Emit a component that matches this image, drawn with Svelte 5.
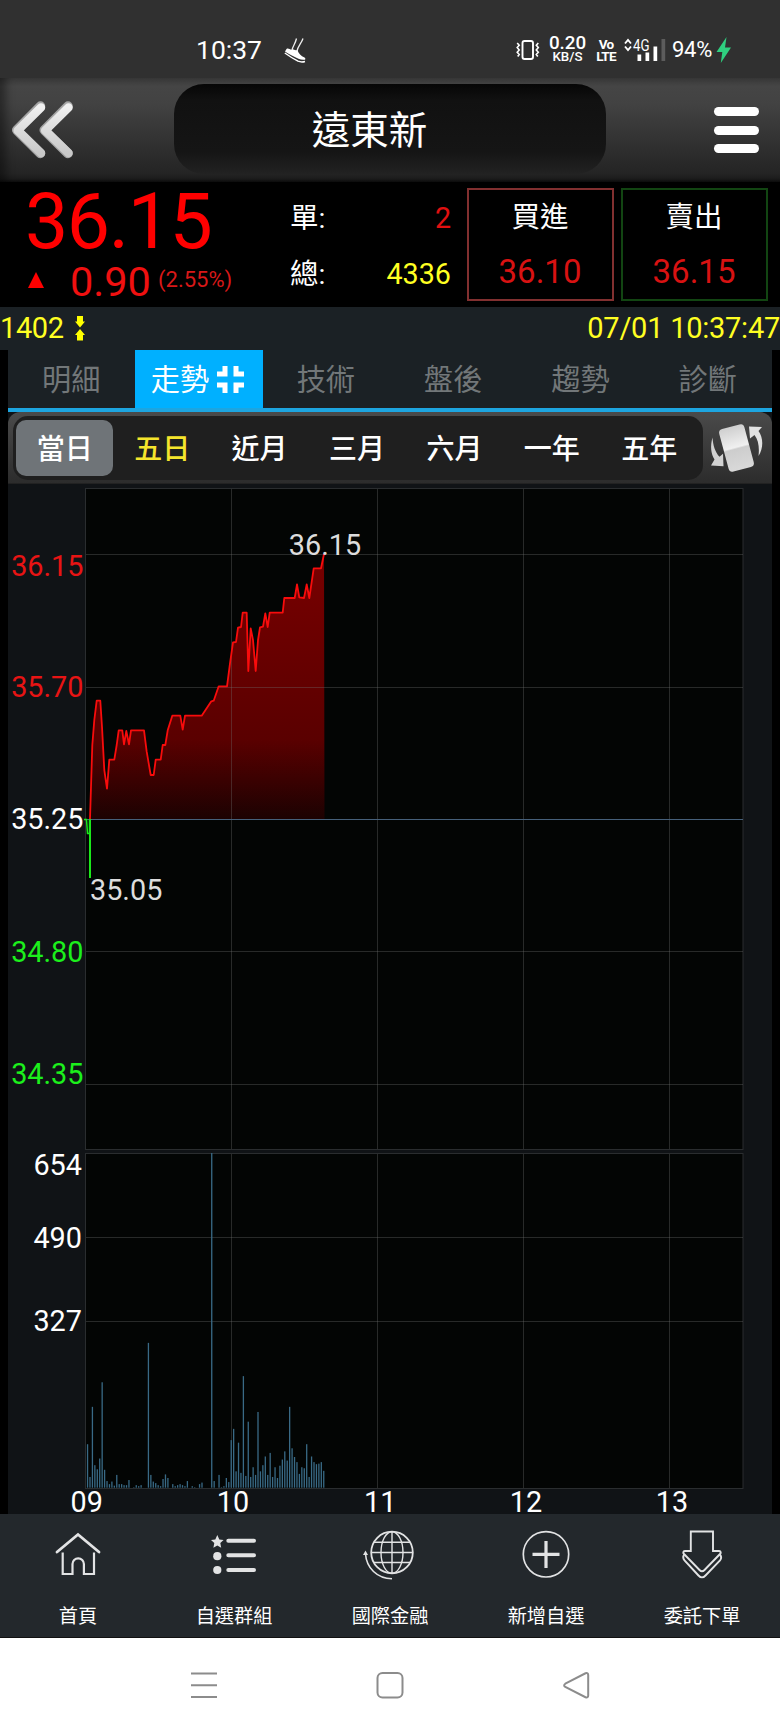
<script lang="ts">
  const tabs = ['明細', '走勢', '技術', '盤後', '趨勢', '診斷'];
  const ranges = ['當日', '五日', '近月', '三月', '六月', '一年', '五年'];
  const navItems = [
    { id: 'home', label: '首頁' },
    { id: 'list', label: '自選群組' },
    { id: 'globe', label: '國際金融' },
    { id: 'add', label: '新增自選' },
    { id: 'order', label: '委託下單' },
  ];

  let activeTab = $state(1);
  let activeRange = $state(0);

  const hours = [
    { label: '09', x: 86.7 },
    { label: '10', x: 233 },
    { label: '11', x: 380.2 },
    { label: '12', x: 526 },
    { label: '13', x: 672 },
  ];
  const gridX = [231.5, 377.5, 523.5, 669.5];
  const priceGridY = [554.5, 687.5, 951.5, 1084.5];
  const volumeGridY = [1237.5, 1321.5];

  const priceLabels = [
    { text: '36.15', y: 575.5, cls: 'up' },
    { text: '35.70', y: 696.7, cls: 'up' },
    { text: '35.25', y: 829, cls: 'flat' },
    { text: '34.80', y: 961.7, cls: 'down' },
    { text: '34.35', y: 1083.5, cls: 'down' },
  ];
  const volumeLabels = [
    { text: '654', y: 1174.5 },
    { text: '490', y: 1247.5 },
    { text: '327', y: 1330.5 },
  ];

  const pricePoints =
    '90,819 92.3,745 94.3,720 96.7,700.7 100.3,700.7 102,726.7 104.3,770 107,788.7 109.3,759.7 ' +
    '114.3,759.7 116.7,745 118.7,730.3 122.3,730.3 124,744.3 126.3,731 129,744.3 131,730.3 144,730.3 ' +
    '146.7,751.7 150.7,775 153.7,775 155.7,759.7 160.7,759.7 162.7,745 165.3,745 167.7,730.3 ' +
    '172.3,715.7 180.3,715.7 182.7,729.7 185,715.7 201.7,715.7 211.3,701.3 213.7,700.7 218.7,686.3 ' +
    '227,686.3 230,663.3 233,642.3 236,642 238,627.7 241,627 242.7,612.7 246.7,612.7 248.3,671 ' +
    '250.7,628.3 253,640 255.7,671 258,640 260,627.3 263,626.7 265.3,613.3 267.7,627 269.7,612.7 ' +
    '282.7,612.7 284.3,598 294.7,598 297,584.3 299.3,597.3 304,598 306.7,584.3 309.3,598 313.7,568.3 ' +
    '321,568.3 324,554';

  // one entry per minute from 09:00
  const volumes = [
    85, 21, 158, 44, 36, 57, 206, 35, 13, 7, 12, 4, 25, 7, 7, 5, 5, 15, 0, 1,
    5, 3, 5, 0, 0, 283, 25, 12, 9, 5, 3, 17, 26, 19, 0, 7, 3, 5, 7, 5,
    3, 13, 0, 3, 1, 0, 7, 10, 0, 0, 0, 654, 13, 0, 25, 1, 3, 19, 11, 93,
    115, 32, 88, 29, 218, 23, 129, 21, 40, 25, 148, 32, 44, 61, 25, 68, 21, 40, 19, 43,
    55, 71, 53, 158, 77, 60, 50, 27, 40, 38, 85, 21, 61, 50, 46, 47, 50, 33,
  ];
  const volumeBase = 1487.7;
  const volumeHeight = 334.7;
  const bars = $derived(
    volumes.map((v, i) => {
      const h = (v / 654) * volumeHeight;
      return { x: 86.9 + i * 2.435, y: volumeBase - h, h };
    })
  );
</script>

<div class="screen">
  <!-- System status bar -->
  <div class="status">
    <span class="clock">10:37</span>
    <svg class="shoe" width="24" height="26" viewBox="0 0 24 26">
      <path d="M12.500 1.500C11.500 6 9 9 8 13M19 1.500C17.500 6 14 9 13 14" stroke="#eee" stroke-width="1.300" fill="none" />
      <path d="M2.500 12c2-1.500 3.500 1.300 6 .5 1.500 0 3 .8 5 .8 1 3.200 3.500 5.700 7 7.200 1 .5 1 1.500.500 2.200-2 .3-4.500.1-6.500-.9C9.500 19.600 5 17 1 14.500z" fill="#fff" />
      <path d="M.8 16C5 19 10 22 14 24.200c2.500 1 5 .9 7 .3" stroke="#fff" stroke-width="1.400" fill="none" />
    </svg>
    <div class="status-right">
      <svg class="vibrate" width="24" height="22" viewBox="0 0 24 22">
        <rect x="6.500" y="2" width="10.500" height="18" rx="2" fill="none" stroke="#fff" stroke-width="1.900" />
        <path d="M1.200 4l2 2.300-2 2.300 2 2.300-2 2.300 2 2.300-1.500 2M22.300 4l-2 2.300 2 2.300-2 2.300 2 2.300-2 2.300 1.500 2" fill="none" stroke="#fff" stroke-width="1.600" />
      </svg>
      <div class="speed"><b>0.20</b><span>KB/S</span></div>
      <div class="volte"><span>Vo</span><span>LTE</span></div>
      <svg class="signal" width="42" height="24" viewBox="0 0 42 24">
        <path d="M1 5.500 4 2l3 3.500M1 8.500 4 12l3-3.500" fill="none" stroke="#fff" stroke-width="1.900" />
        <text x="9" y="12.500" class="net" textLength="16.500" lengthAdjust="spacingAndGlyphs">4G</text>
        <rect x="13.500" y="16.500" width="3.700" height="6.500" fill="#fff" />
        <rect x="21.500" y="14.500" width="3.700" height="8.500" fill="#fff" />
        <rect x="29.500" y="8.500" width="3.700" height="14.500" fill="#fff" />
        <rect x="37.500" y="1" width="3.700" height="22" fill="#5c5c5c" />
      </svg>
      <span class="battery">94%</span>
      <svg width="16" height="26" viewBox="0 0 16 26">
        <path d="M10.500 0 .5 15h5.800L4.800 26 15 10.500H9z" fill="#2fcf7f" />
      </svg>
    </div>
  </div>

  <!-- App header -->
  <header class="header">
    <button class="back" aria-label="返回">
      <svg width="64" height="60" viewBox="0 0 64 60">
        <defs>
          <linearGradient id="chev" x1="0" y1="0" x2="0" y2="1">
            <stop offset="0" stop-color="#f0f0f0" />
            <stop offset="1" stop-color="#c8c8c8" />
          </linearGradient>
        </defs>
        <path d="M29.500 6 5.700 30 29.500 53.500M57 6 33.200 30 57 53.500" class="chev-edge" />
        <path d="M30 7.500 6.700 30.500 30 53M57.500 7.500 34.200 30.500l23.300 22.500" class="chev" />
      </svg>
    </button>
    <h1 class="title">遠東新</h1>
    <button class="menu" aria-label="選單">
      <i></i><i></i><i></i>
    </button>
  </header>

  <!-- Quote summary -->
  <section class="quote">
    <div class="last">
      <div class="last-price">36.15</div>
      <div class="change">
        <svg width="16" height="16" viewBox="0 0 16 16"><path d="M8 0l8 16H0z" fill="#f00" /></svg>
        <span class="diff">0.90</span>
        <span class="pct">(2.55%)</span>
      </div>
    </div>
    <dl class="totals">
      <div><dt>單:</dt><dd class="red">2</dd></div>
      <div><dt>總:</dt><dd class="yellow">4336</dd></div>
    </dl>
    <button class="deal buy"><span>買進</span><b>36.10</b></button>
    <button class="deal sell"><span>賣出</span><b>36.15</b></button>
  </section>

  <div class="info">
    <span class="code">1402</span>
    <svg width="10" height="25" viewBox="0 0 10 25">
      <path d="M2 0h6v5.500h2L5 11.500 0 5.500h2zM5 13l5 6H8v5.500H2V19H0z" fill="#ff0" />
    </svg>
    <span class="time">07/01 10:37:47</span>
  </div>

  <main class="body">
    <nav class="tabs">
      {#each tabs as tab, i}
        <button class="tab" class:active={i === activeTab} onclick={() => (activeTab = i)}>
          <span>{tab}</span>
          {#if i === activeTab}
            <svg width="27" height="27" viewBox="0 0 27 27">
              <path d="M0 8h8V0M19 0v8h8M0 19h8v8M19 27v-8h8" class="shrink" />
            </svg>
          {/if}
        </button>
      {/each}
    </nav>

    <div class="range-bar">
      <div class="ranges">
        {#each ranges as range, i}
          <button
            class="range"
            class:active={i === activeRange}
            class:marked={i === 1}
            onclick={() => (activeRange = i)}
          >
            {range}
          </button>
        {/each}
      </div>
      <button class="rotate" aria-label="旋轉">
        <svg width="54" height="52" viewBox="0 0 54 52">
          <defs>
            <linearGradient id="phone" x1="0" y1="0" x2="0" y2="1">
              <stop offset="0" stop-color="#cfcfcf" />
              <stop offset="0.480" stop-color="#f0f0f0" />
              <stop offset="0.520" stop-color="#cdcdcd" />
              <stop offset="1" stop-color="#d9d9d9" />
            </linearGradient>
          </defs>
          <rect x="14.500" y="4" width="26" height="44" rx="4" fill="url(#phone)" transform="rotate(-15 27.500 26)" />
          <path d="M3.500 15.500C1 24 2 32 5.500 37.500L2 43.500l12.500.800-.500-12.500-3.500 3C6 30 4 23 3.500 15.500z" fill="#d2d2d2" />
          <path d="M40 4.500 53 5l-3.500 4C54.500 16 54.500 26 49.500 34 50.500 26 49.500 18 45.500 13L41 16.500z" fill="#e2e2e2" />
        </svg>
      </button>
    </div>

    <svg class="chart" width="764" height="1030" viewBox="8 484 764 1030">
      <defs>
        <linearGradient id="area" gradientUnits="userSpaceOnUse" x1="0" y1="554" x2="0" y2="819">
          <stop offset="0" stop-color="#780000" />
          <stop offset="0.700" stop-color="#5a0000" />
          <stop offset="1" stop-color="#1c0202" />
        </linearGradient>
      </defs>

      <rect x="85.500" y="488.500" width="657.500" height="661" class="plot" />
      <rect x="85.500" y="1153.500" width="657.500" height="335" class="plot" />

      <polygon points="{pricePoints} 324.5,819 90,819" fill="url(#area)" />

      {#each gridX as x}
        <line x1={x} x2={x} y1="489" y2="1149" class="grid" />
        <line x1={x} x2={x} y1="1154" y2="1488" class="grid" />
      {/each}
      {#each [...priceGridY, ...volumeGridY] as y}
        <line x1="86" x2="743" y1={y} y2={y} class="grid" />
      {/each}
      <line x1="86" x2="743" y1="819.500" y2="819.500" class="ref-line" />

      <polyline points={pricePoints} class="line-up" />
      <path d="M84 819.500h2.500l1 14h2V820" class="line-down" />
      <path d="M90 819v59" class="line-down thick" />

      {#each bars as bar}
        <rect x={bar.x} y={bar.y} width="1.300" height={bar.h} class="bar" />
      {/each}

      {#each priceLabels as label}
        <text x="83.500" y={label.y} class="axis {label.cls}">{label.text}</text>
      {/each}
      {#each volumeLabels as label}
        <text x="82" y={label.y} class="axis flat">{label.text}</text>
      {/each}
      {#each hours as hour}
        <text x={hour.x} y="1511.500" class="hour">{hour.label}</text>
      {/each}
      <text x="325" y="554.500" class="peak" text-anchor="middle">36.15</text>
      <text x="90" y="899.500" class="peak">35.05</text>
    </svg>
  </main>

  <!-- Bottom navigation -->
  <nav class="bottom">
    {#each navItems as item}
      <button class="nav-item">
        <svg width="60" height="60" viewBox="0 0 60 60">
          {#if item.id === 'home'}
            <path d="M9 27 30 9.500 51 27" stroke-width="2.800" stroke-linecap="round" />
            <path d="M14.700 27.500V49H24.500V39a5.700 5.700 0 0 1 11.400 0V49H46V27.500" stroke-width="2.200" />
          {:else if item.id === 'list'}
            <path d="M13.300 10l2 4.400 4.300.500-3.300 3.200.9 4.600-3.900-2.300-3.900 2.300.9-4.600L7 14.900l4.300-.5z" class="solid" />
            <circle cx="13.300" cy="31.200" r="4.100" class="solid" />
            <circle cx="13.300" cy="45" r="4.100" class="solid" />
            <path d="M24.300 15.700H50M24.300 30.300H50M24.300 45H50" stroke-width="4" stroke-linecap="round" />
          {:else if item.id === 'globe'}
            <circle cx="32" cy="27.500" r="20.800" stroke-width="1.800" />
            <ellipse cx="32" cy="27.500" rx="11" ry="20.800" stroke-width="1.400" />
            <path d="M32 7v41M11 27.500h42M14 17.300h36M14 37.500h36" stroke-width="1.400" />
            <path d="M5.500 29C6.500 43 17 53.500 32 53.800" stroke-width="1.600" />
            <path d="M5.500 25.500l2.500 4.500H3z" class="solid" />
          {:else if item.id === 'add'}
            <circle cx="30" cy="29.300" r="22.700" stroke-width="1.700" />
            <path d="M30 16v27M16.500 29.300h27" stroke-width="3.200" />
          {:else}
            <path d="M18.800 6.500H41V26h6c2 .3 2.200 1.700 1 3L32.500 45c-1.700 1.700-3.300 1.700-5 0L12 29c-1.200-1.300-1-2.700 1-3h5.800z" stroke-width="1.900" />
            <path d="M12.500 29c-2 2.800-1.600 4.500 0 6.300L26.500 50.500c2.400 2.500 4.600 2.500 7 0L48 35.300c1.600-1.800 2-3.500-.500-6.300" stroke-width="1.900" />
          {/if}
        </svg>
        <span>{item.label}</span>
      </button>
    {/each}
  </nav>

  <!-- System navigation -->
  <div class="system">
    <svg width="28" height="28" viewBox="0 0 28 28"><path d="M1 2.500h26M1 14.300h26M1 26h26" /></svg>
    <svg width="28" height="28" viewBox="0 0 28 28"><rect x="1.500" y="2" width="25" height="24.500" rx="5" /></svg>
    <svg width="28" height="28" viewBox="0 0 28 28"><path d="M3.300 12.700 23.500 2.300q2.700-.8 2.700 1.700v20.500q0 2.500-2.700 1.700L3.300 16q-2.300-1.600 0-3.300z" /></svg>
  </div>
</div>

<style>
  :global(body) {
    margin: 0;
    background: #000;
  }

  .screen {
    width: 780px;
    height: 1733px;
    display: flex;
    flex-direction: column;
    overflow: hidden;
    background: #000;
    color: #fff;
    font-family: Roboto, 'Noto Sans CJK TC', sans-serif;
  }

  button {
    border: 0;
    padding: 0;
    background: none;
    color: inherit;
    font: inherit;
  }

  svg {
    display: block;
    flex: none;
  }

  /* ── Status bar ───────────────────────────────────────── */
  .status {
    height: 78px;
    flex: none;
    display: flex;
    align-items: center;
    box-sizing: border-box;
    padding: 22px 48px 0 196px;
    background: #303030;
  }

  .clock {
    width: 68px;
    margin-top: -2px;
    font-size: 26.5px;
  }

  .shoe { margin-left: 20px; }

  .status-right {
    margin-left: auto;
    width: 216px;
    display: flex;
    align-items: center;
  }

  .speed {
    width: 37px;
    margin-left: 9px;
    display: flex;
    flex-direction: column;
    align-items: center;
    font-weight: 500;
    line-height: 14px;
    font-size: 13.3px;
  }

  .speed b {
    font-size: 18.8px;
    line-height: 14px;
    font-weight: 500;
  }

  .volte {
    width: 18px;
    margin-left: 11px;
    display: flex;
    flex-direction: column;
    align-items: center;
    font-size: 13.5px;
    font-weight: 700;
    line-height: 12px;
    letter-spacing: -0.8px;
  }

  .signal { margin-left: 9px; }

  .net {
    font-size: 16px;
    fill: #fff;
  }

  .battery {
    width: 41px;
    margin-left: 6px;
    margin-right: 3px;
    font-size: 22px;
    letter-spacing: -0.3px;
    line-height: 24px;
  }

  /* ── Header ───────────────────────────────────────────── */
  .header {
    height: 104px;
    flex: none;
    display: flex;
    align-items: center;
    box-sizing: border-box;
    padding: 0 21px 0 11px;
    background: linear-gradient(#383838, #454545 8%, #424242 25%, #242424 92%, #1c1c1c 97%, #0c0c0c);
    box-shadow: inset 12px 0 8px -6px rgba(0, 0, 0, 0.4);
  }

  .chev,
  .chev-edge {
    fill: none;
    stroke-linecap: round;
    stroke-linejoin: round;
  }

  .chev { stroke: url(#chev); stroke-width: 8.5; }
  .chev-edge { stroke: #a4a4a4; stroke-width: 9.5; }

  .title {
    width: 432px;
    height: 90px;
    margin: -2px 0 0 99px;
    box-sizing: border-box;
    padding-right: 41px;
    border-radius: 30px;
    background: linear-gradient(#060606, #111 18%, #151515 75%, #222);
    text-align: center;
    font-size: 38.5px;
    font-weight: 400;
    line-height: 94px;
  }

  .menu {
    margin-left: auto;
    display: flex;
    flex-direction: column;
    gap: 9.5px;
  }

  .menu i {
    width: 45px;
    height: 9px;
    border-radius: 5px;
    background: #fff;
  }

  /* ── Quote ────────────────────────────────────────────── */
  .quote {
    height: 125px;
    flex: none;
    display: flex;
    box-sizing: border-box;
    padding: 6px 12px 6px 25px;
  }

  .last { width: 265px; }

  .last-price {
    height: 66px;
    line-height: 68px;
    font-size: 77px;
    letter-spacing: -1.4px;
    color: #f00;
  }

  .change {
    display: flex;
    align-items: center;
    height: 46px;
    padding: 3px 0 0 3px;
  }

  .diff {
    width: 84px;
    margin-left: 26px;
    margin-top: 3px;
    font-size: 41.5px;
    line-height: 46px;
    color: #f01010;
  }

  .pct {
    margin-left: 4px;
    margin-top: -2px;
    font-size: 22px;
    color: #d81818;
  }

  .totals {
    width: 161px;
    margin: 0 16px 0 0;
    font-size: 28.7px;
  }

  .totals div {
    display: flex;
    justify-content: space-between;
    height: 56px;
    line-height: 60px;
  }

  dt { font-size: 28.5px; margin-top: 1px; }
  dd { margin: 0; }

  .red { color: #e01010; }
  .yellow { color: #ff2; }

  .deal {
    width: 147px;
    height: 113px;
    box-sizing: border-box;
    display: flex;
    flex-direction: column;
    align-items: center;
    padding: 1px 1px 0 0;
    border: 2px solid #823030;
  }

  .deal.sell {
    margin-left: 7px;
    border-color: #124512;
  }

  .deal span {
    font-size: 28.5px;
    line-height: 54px;
  }

  .deal b {
    font-size: 33px;
    line-height: 54px;
    font-weight: 400;
    color: #d81212;
  }

  .info {
    height: 43px;
    flex: none;
    display: flex;
    box-sizing: border-box;
    padding-top: 9px;
    background: #1b2125;
    color: #ff2;
    font-size: 29px;
    line-height: 24px;
  }

  .code { width: 75px; letter-spacing: -0.4px; }

  .time {
    margin-left: auto;
    letter-spacing: -0.25px;
    white-space: nowrap;
  }

  /* ── Tabs ─────────────────────────────────────────────── */
  .body {
    width: 764px;
    margin: 0 auto;
    background: #101316;
  }

  .tabs {
    display: flex;
    height: 62px;
    box-sizing: border-box;
    border-bottom: 4px solid #1da5e0;
    background: #1b2125;
  }

  .tab {
    flex: 1;
    display: flex;
    align-items: center;
    justify-content: center;
    gap: 8px;
    font-size: 29.2px;
    color: #727779;
  }

  .tab span { margin: -4px 1px 0 0; }

  .tab.active {
    background: #00b0ff;
    color: #fff;
  }

  .tab.active span { margin-right: 0; }
  .tab.active svg { margin-right: 3px; }

  .shrink {
    fill: none;
    stroke: #fff;
    stroke-width: 5;
  }

  /* ── Range selector ───────────────────────────────────── */
  .range-bar {
    display: flex;
    align-items: center;
    height: 72px;
    box-sizing: border-box;
    padding-left: 5px;
    border-bottom: 1px solid #222;
    border-radius: 12px 12px 0 0;
    background: linear-gradient(#4a4a4a, #2c2c2c);
  }

  .ranges {
    width: 690px;
    height: 64px;
    box-sizing: border-box;
    padding: 4px 5px 4px 3px;
    display: flex;
    border-radius: 15px;
    background: #1f1f1f;
  }

  .range {
    flex: 1;
    padding-top: 2px;
    border-radius: 10px;
    font-size: 28px;
    font-weight: 500;
    line-height: 56px;
  }

  .range.marked { color: #f5e52c; }
  .range.active { background: #6f7478; }
  .rotate { margin-left: 6px; }

  /* ── Chart ────────────────────────────────────────────── */
  .plot {
    fill: #030504;
    stroke: #2a2d2f;
    stroke-width: 1;
  }

  .grid {
    stroke: #707070;
    stroke-opacity: 0.35;
  }

  .ref-line { stroke: #46607a; }

  .line-up {
    fill: none;
    stroke: #f80c0c;
    stroke-width: 1.8;
    stroke-linejoin: round;
  }

  .line-down {
    fill: none;
    stroke: #1be81b;
    stroke-width: 1.5;
  }

  .line-down.thick { stroke-width: 2; }
  .bar { fill: #396a86; }

  .axis {
    font-size: 28.8px;
    text-anchor: end;
  }

  .up { fill: #e81414; }
  .flat { fill: #fff; }
  .down { fill: #1cf01c; }

  .hour {
    font-size: 28.8px;
    fill: #fff;
    text-anchor: middle;
  }

  .peak {
    font-size: 28.8px;
    fill: #ddd;
  }

  /* ── Bottom navigation ────────────────────────────────── */
  .bottom {
    height: 124px;
    flex: none;
    display: flex;
    box-sizing: border-box;
    border-bottom: 1px solid #111;
    background: #23282c;
  }

  .nav-item {
    flex: 1;
    display: flex;
    flex-direction: column;
    align-items: center;
    padding-top: 11px;
    font-size: 19.2px;
  }

  .nav-item span {
    margin-top: 17px;
    line-height: 30px;
  }

  .nav-item svg {
    fill: none;
    stroke: #e2e3e4;
  }

  .nav-item svg .solid {
    fill: #e2e3e4;
    stroke: none;
  }

  .system {
    flex: 1;
    display: flex;
    justify-content: center;
    gap: 158px;
    padding-top: 33px;
    background: #fff;
  }

  .system svg {
    fill: none;
    stroke: #8c8c8c;
    stroke-width: 2;
  }
</style>
